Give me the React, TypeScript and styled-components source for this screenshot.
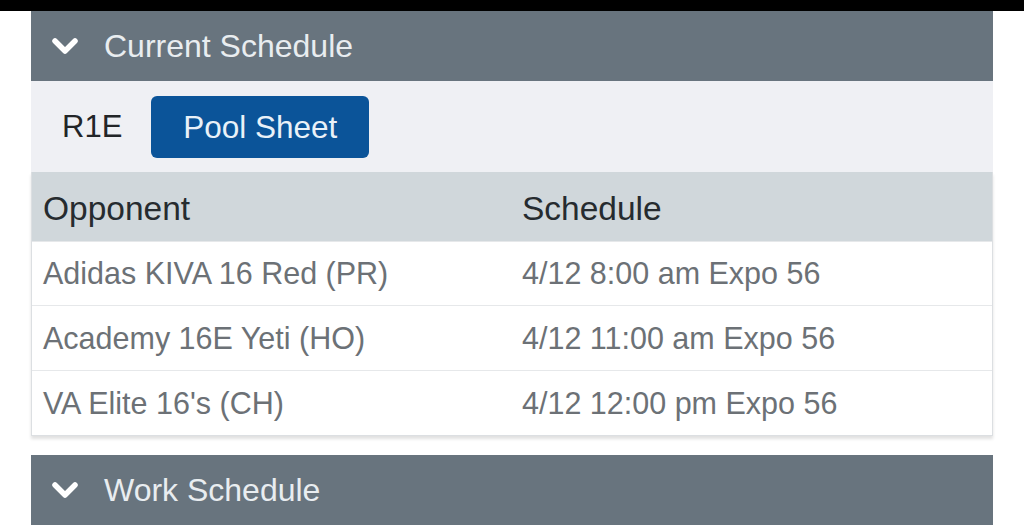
import React from 'react'
import styled, { createGlobalStyle } from 'styled-components'

const GlobalStyle = createGlobalStyle`
  html, body {
    margin: 0;
    padding: 0;
    background: #ffffff;
    font-family: "Liberation Sans", Arial, Helvetica, sans-serif;
  }
`

const StatusBar = styled.div`
  height: 11px;
  background: #000;
`

const Page = styled.div`
  padding: 0 31px;
  display: flex;
  flex-direction: column;
  gap: 19px;
`

const Section = styled.section`
  display: flex;
  flex-direction: column;
`

const SectionHeader = styled.div`
  height: 70px;
  background: #68747e;
  display: flex;
  align-items: center;
  gap: 26px;
  padding-left: 21px;
  padding-top: 1px;
  color: #e9edf0;
  font-size: 32px;
  box-sizing: border-box;
`

const Chevron = () => (
  <svg width="26" height="18" viewBox="0 0 26 18">
    <polyline points="3,3 13,13 23,3" fill="none" stroke="#ffffff" strokeWidth="5.5" strokeLinecap="round" strokeLinejoin="round" />
  </svg>
)

const SectionBody = styled.div`
  background: #eff0f4;
  display: flex;
  flex-direction: column;
`

const Toolbar = styled.div`
  display: flex;
  align-items: center;
  gap: 29px;
  padding: 15px 0 14px 31px;
`

const PoolLabel = styled.span`
  font-size: 31px;
  color: #222528;
`

const PoolButton = styled.button`
  height: 62px;
  width: 218px;
  border: none;
  border-radius: 6px;
  background: #0b5499;
  color: #e9f1f8;
  font-family: inherit;
  font-size: 31.5px;
  padding: 0;
  cursor: pointer;
`

const Table = styled.div`
  border: 1px solid #dcdfe2;
  border-top: none;
  background: #ffffff;
  box-shadow: 0 3px 3px rgba(0, 0, 0, 0.12);
`

const Row = styled.div<{ $head?: boolean }>`
  display: grid;
  grid-template-columns: 479px 1fr;
  align-items: center;
  box-sizing: border-box;
  height: ${p => (p.$head ? '69px' : '65px')};
  padding-left: 11px;
  padding-top: ${p => (p.$head ? '5px' : '0')};
  background: ${p => (p.$head ? '#d0d7db' : '#ffffff')};
  color: ${p => (p.$head ? '#262b2f' : '#6c7176')};
  font-size: ${p => (p.$head ? '33.5px' : '30.5px')};
  & + & {
    border-top: ${p => (p.$head ? 'none' : '1px solid #e6e8ea')};
  }
  &:nth-child(2) {
    height: 64px;
  }
`

const rows = [
  ['Adidas KIVA 16 Red (PR)', '4/12 8:00 am Expo 56'],
  ['Academy 16E Yeti (HO)', '4/12 11:00 am Expo 56'],
  ["VA Elite 16's (CH)", '4/12 12:00 pm Expo 56'],
]

export default function App() {
  return (
    <>
      <GlobalStyle />
      <StatusBar />
      <Page>
        <Section>
          <SectionHeader>
            <Chevron />
            <span>Current Schedule</span>
          </SectionHeader>
          <SectionBody>
            <Toolbar>
              <PoolLabel>R1E</PoolLabel>
              <PoolButton>Pool Sheet</PoolButton>
            </Toolbar>
            <Table>
              <Row $head>
                <span>Opponent</span>
                <span>Schedule</span>
              </Row>
              {rows.map(([team, time]) => (
                <Row key={team}>
                  <span>{team}</span>
                  <span>{time}</span>
                </Row>
              ))}
            </Table>
          </SectionBody>
        </Section>
        <Section>
          <SectionHeader>
            <Chevron />
            <span>Work Schedule</span>
          </SectionHeader>
        </Section>
      </Page>
    </>
  )
}
